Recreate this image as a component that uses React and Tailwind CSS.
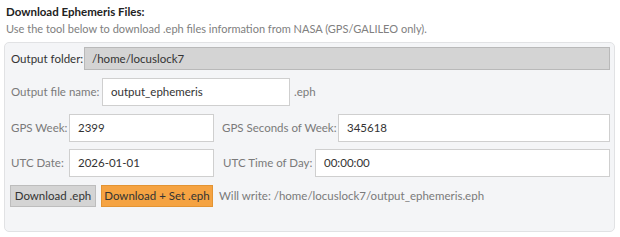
import React from 'react';

const font = { fontFamily: 'Lato, "Noto Sans", sans-serif' };

const Field = ({ value, className = '' }) => (
  <div className={`h-[28px] flex items-center px-[8px] bg-white border border-[#cfcfcf] text-[11.5px] text-[#333] ${className}`}>
    {value}
  </div>
);

const Label = ({ children, className = '' }) => (
  <span className={`shrink-0 text-[11.5px] text-[#7a7a7a] whitespace-nowrap ${className}`}>{children}</span>
);

export default function App() {
  return (
    <div className="w-[620px] h-[237px] bg-white overflow-hidden" style={font}>
      <div className="pl-[6px] pt-[3px]">
        <h2 className="text-[11.5px] font-bold text-[#222] leading-[18px]">Download Ephemeris Files:</h2>
        <p className="text-[11px] text-[#808080] leading-[16px]">
          Use the tool below to download .eph files information from NASA (GPS/GALILEO only).
        </p>
      </div>

      <div className="mt-[5px] ml-[4px] w-[611px] h-[190px] bg-[#f4f5f7] border border-[#e1e2e4] rounded-[5px] pl-[6px] pr-[4px] pt-[4px]">
        {/* output folder */}
        <div className="flex items-center">
          <Label className="text-[#333] w-[73px]">Output folder:</Label>
          <div className="flex-1 h-[23px] flex items-center px-[7px] bg-[#d4d4d4] border border-[#b9b9b9] text-[11.5px] text-[#333]">
            /home/locuslock7
          </div>
        </div>

        {/* output file name */}
        <div className="flex items-center mt-[8px]">
          <Label className="w-[91px]">Output file name:</Label>
          <Field value="output_ephemeris" className="w-[188px]" />
          <Label className="ml-[4px]">.eph</Label>
        </div>

        {/* GPS */}
        <div className="flex items-center mt-[8px]">
          <Label className="w-[58px]">GPS Week:</Label>
          <Field value="2399" className="w-[145px]" />
          <Label className="ml-[8px] w-[116px]">GPS Seconds of Week:</Label>
          <Field value="345618" className="flex-1" />
        </div>

        {/* UTC */}
        <div className="flex items-center mt-[7px]">
          <Label className="w-[58px]">UTC Date:</Label>
          <Field value="2026-01-01" className="w-[145px]" />
          <Label className="ml-[9px] w-[92px]">UTC Time of Day:</Label>
          <Field value="00:00:00" className="flex-1" />
        </div>

        {/* buttons */}
        <div className="flex items-center mt-[8px]">
          <button className="shrink-0 whitespace-nowrap h-[22px] w-[86px] -ml-[1px] bg-[#d4d4d4] border border-[#bdbdbd] text-[11.5px] text-[#333]">
            Download .eph
          </button>
          <button className="shrink-0 whitespace-nowrap h-[22px] w-[112px] ml-[5px] bg-[#f5a342] border border-[#e39433] text-[11.5px] text-[#333]">
            Download + Set .eph
          </button>
          <Label className="ml-[6px]">Will write: /home/locuslock7/output_ephemeris.eph</Label>
        </div>
      </div>
    </div>
  );
}
